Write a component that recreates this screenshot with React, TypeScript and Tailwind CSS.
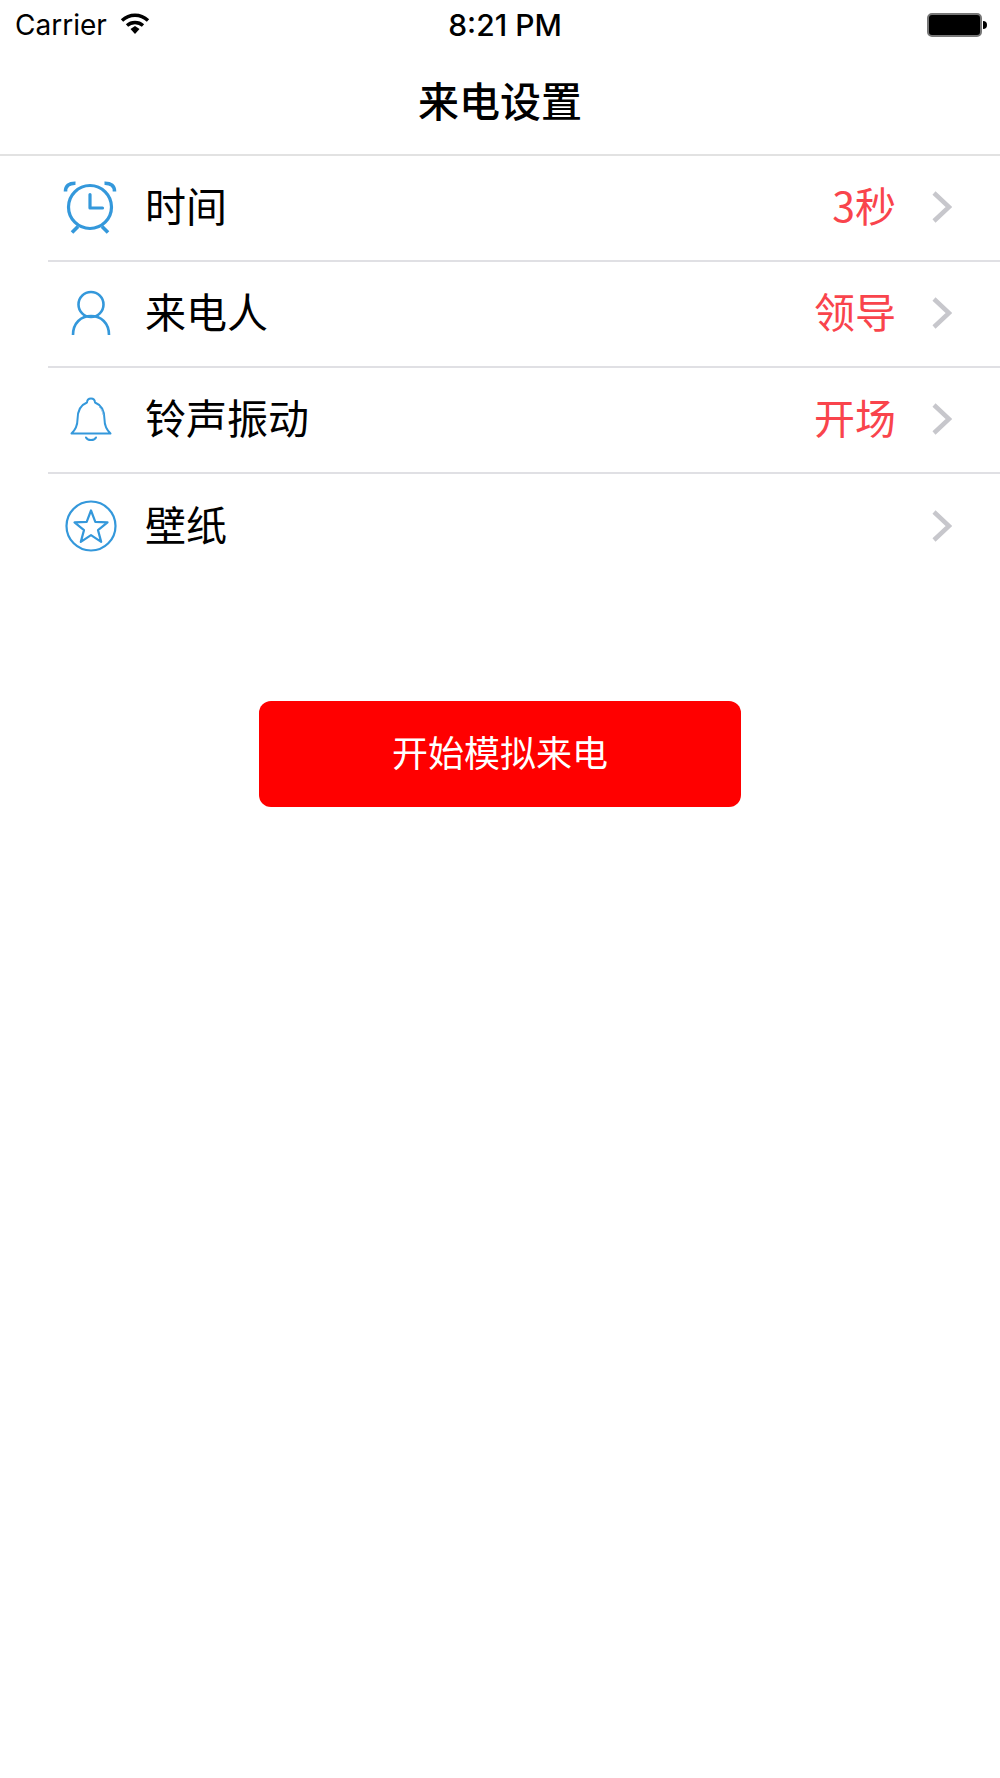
const cjk = "font-['Noto_Sans_CJK_SC',sans-serif]";

const AlarmIcon = () => (
  <svg viewBox="0 0 54 54" aria-hidden="true" className="mr-[2px] h-[54px] w-[54px]" fill="none" stroke="#3498db" strokeWidth="3.2">
    <circle cx="27" cy="27" r="21.500" />
    <path d="M27 14.500V28h12.500" strokeLinecap="round" strokeLinejoin="round" />
    <path d="M2.500 11.500C2.500 6 6 3 12.500 3.200M51.500 11.500C51.500 6 48 3 41.500 3.200" strokeWidth="3.600" />
    <path d="M15 46.500 L9 52.500M39 46.500 L45 52.500" strokeWidth="3.600" />
  </svg>
);

const PersonIcon = () => (
  <svg viewBox="0 0 40 46" aria-hidden="true" className="h-[46px] w-[40px]" fill="none" stroke="#3498db" strokeWidth="2.600">
    <circle cx="20" cy="14.500" r="12.500" />
    <path d="M2 45C2 33 10 26 20 26s18 7 18 19" />
  </svg>
);

const BellIcon = () => (
  <svg viewBox="0 0 42 46" aria-hidden="true" className="h-[46px] w-[42px]" fill="none" stroke="#3498db" strokeWidth="2" strokeLinejoin="round">
    <path d="M1.500 37.500c4-3.800 6-7.500 6-14 0-9 3-14.500 9.500-17 .3-5.500 7.700-5.500 8 0 6.500 2.500 9.500 8 9.500 17 0 6.500 2 10.200 6 14z" />
    <path d="M16 41.500c1.600 3.400 8.400 3.400 10 0" strokeLinecap="round" />
    <path d="M29 11c2.500 2 3.500 4.500 4 8" strokeWidth="1" stroke="#9cc9ea" />
  </svg>
);

const StarIcon = () => (
  <svg viewBox="0 0 52 52" aria-hidden="true" className="h-[52px] w-[52px]" fill="none" stroke="#3498db" strokeLinejoin="round">
    <circle cx="26" cy="26" r="24.500" strokeWidth="2.200" />
    <path d="M26 10.500l4.300 11.300 12.200.6-9.500 7.700 3.200 11.800L26 35.200l-10.200 6.700L19 30.100l-9.500-7.700 12.200-.6z" strokeWidth="2.200" />
  </svg>
);

const Chevron = () => (
  <svg viewBox="0 0 20 32" aria-hidden="true" className="h-[32px] w-[20px]" fill="none" stroke="#c7c7cc" strokeWidth="4.500">
    <path d="M2 2l15 14L2 30" />
  </svg>
);

const rows = [
  { label: "时间", value: "3秒", icon: <AlarmIcon /> },
  { label: "来电人", value: "领导", icon: <PersonIcon /> },
  { label: "铃声振动", value: "开场", icon: <BellIcon /> },
  { label: "壁纸", value: "", icon: <StarIcon /> },
];

export default function App() {
  return (
    <div className={`flex h-[1778px] w-[1000px] flex-col bg-white text-black ${cjk}`}>
      <header className="h-[156px] border-b-2 border-[#e2e2e2]">
        <div className="grid h-[50px] grid-cols-3 items-center pl-[15px] pr-[13px]">
          <div className="flex items-center gap-[13px]">
            <span className="font-['Inter',sans-serif] text-[28px] leading-none">Carrier</span>
            <svg viewBox="0 0 30 24" aria-hidden="true" className="mb-[4px] h-[24px] w-[30px]" fill="none" stroke="#000">
              <path d="M2 9.500c7.500-7 18.500-7 26 0" strokeWidth="3.400" />
              <path d="M7 14.500c4.500-4 11.500-4 16 0" strokeWidth="3.400" />
              <path d="M10.500 18l4.500-3 4.500 3-4.500 5z" fill="#000" stroke="none" />
            </svg>
          </div>
          <span className="pl-[8px] text-center font-['Inter',sans-serif] text-[30px] font-medium leading-none">8:21 PM</span>
          <div className="flex items-center justify-end gap-[1px]">
            <div className="h-[24px] w-[55px] rounded-[5px] border-2 border-[#777] bg-black" />
            <div className="h-[8px] w-[4px] rounded-r-full bg-black" />
          </div>
        </div>
        <h1 className="mt-[11px] text-center text-[41px] font-medium leading-[76px]">来电设置</h1>
      </header>
      <ul className="ml-[48px]">
        {rows.map((row, i) => (
          <li
            key={row.label}
            className={`flex h-[106px] items-center pb-[3px] pr-[48px] ${i < 3 ? "border-b-2 border-[#e0e0e4]" : ""}`}
          >
            <div className="flex w-[85px] justify-center">{row.icon}</div>
            <span className="mb-[5px] ml-[12px] text-[41px] leading-none">{row.label}</span>
            <span className="mb-[5px] ml-auto text-[41px] leading-none text-[#f9444c]">{row.value}</span>
            <div className="ml-[36px]">
              <Chevron />
            </div>
          </li>
        ))}
      </ul>
      <button className="mx-auto mt-[121px] h-[106px] w-[482px] rounded-[12px] bg-[#ff0000] pb-[7px] text-[36px] text-white">
        开始模拟来电
      </button>
    </div>
  );
}
